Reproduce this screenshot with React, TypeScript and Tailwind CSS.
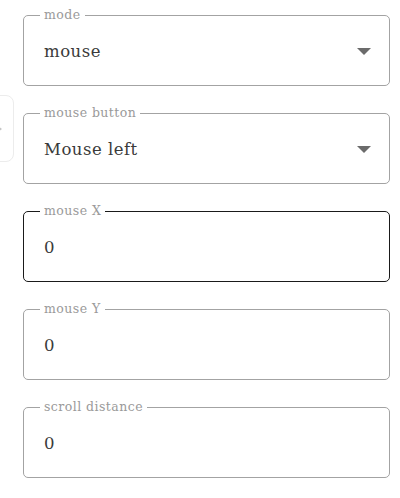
import { ReactNode } from 'react'

const font = { fontFamily: '"DejaVu Serif", serif' }

function Field({
  label,
  value,
  select = false,
  focused = false,
}: {
  label: string
  value: string
  select?: boolean
  focused?: boolean
}) {
  return (
    <div
      className={
        'relative flex h-[71px] items-center rounded-[5px] border pl-5 pr-[18px] pt-[4px] ' +
        (focused ? 'border-[#1a1a1a]' : 'border-[#a3a3a3]')
      }
    >
      <span className="absolute -top-[9px] left-[16px] bg-white px-[4px] text-[12.5px] leading-[16px] tracking-[0.45px] text-[#9a9a9a]">
        {label}
      </span>
      <span className="flex-1 text-[16.5px] tracking-[0.5px] text-[#3a3a3a]">{value}</span>
      {select && (
        <svg width="14" height="8" viewBox="0 0 14 8" className="mb-[2px]">
          <path d="M0 0h14L7 7z" fill="#6b6b6b" />
        </svg>
      )}
    </div>
  )
}

function SidePeek({ children }: { children?: ReactNode }) {
  return (
    <div className="absolute left-[-6px] top-[95px] flex h-[67px] w-[20px] items-center justify-end rounded-r-[8px] border border-[#ececec] pr-[11px]">
      {children}
    </div>
  )
}

export default function App() {
  return (
    <div className="relative h-[498px] w-[400px] overflow-hidden bg-white" style={font}>
      <SidePeek>
        <svg width="4" height="6" viewBox="0 0 4 6">
          <path d="M0 0l4 3-4 3z" fill="#c4c4c4" />
        </svg>
      </SidePeek>
      <div className="flex flex-col gap-[27px] pl-[23px] pr-[10px] pt-[15px]">
        <Field label="mode" value="mouse" select />
        <Field label="mouse button" value="Mouse left" select />
        <Field label="mouse X" value="0" focused />
        <Field label="mouse Y" value="0" />
        <Field label="scroll distance" value="0" />
      </div>
    </div>
  )
}
